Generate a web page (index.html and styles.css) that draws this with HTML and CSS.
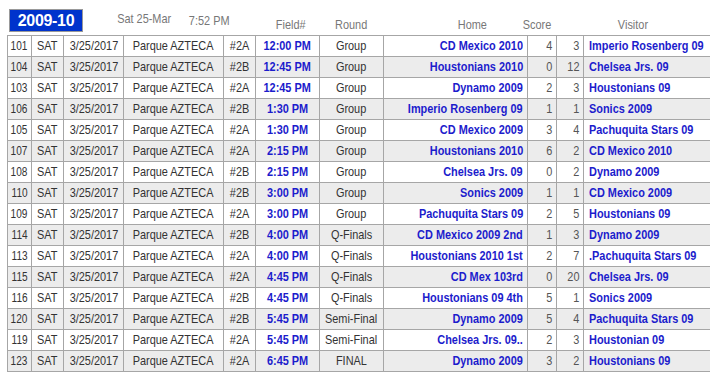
FILE: index.html
```html
<!DOCTYPE html>
<html>
<head>
<meta charset="utf-8">
<link rel="stylesheet" href="styles.css">
</head>
<body>
<div class="page">
  <div class="top">
    <div class="badge">2009-10</div>
    <span class="meta meta-date"><span class="t">Sat 25-Mar</span></span>
    <span class="meta meta-time"><span class="t">7:52 PM</span></span>
    <span class="lbl lbl-field"><span class="t">Field#</span></span>
    <span class="lbl lbl-round"><span class="t">Round</span></span>
    <span class="lbl lbl-home"><span class="t">Home</span></span>
    <span class="lbl lbl-score"><span class="t">Score</span></span>
    <span class="lbl lbl-visitor"><span class="t">Visitor</span></span>
  </div>
  <div class="sched" id="sched"></div>
</div>
<script src="app.js"></script>
</body>
</html>
```

FILE: app.js
```js
var games = [
  ["101","#2A","12:00 PM","Group","CD Mexico 2010","4","3","Imperio Rosenberg 09"],
  ["104","#2B","12:45 PM","Group","Houstonians 2010","0","12","Chelsea Jrs. 09"],
  ["103","#2A","12:45 PM","Group","Dynamo 2009","2","3","Houstonians 09"],
  ["106","#2B","1:30 PM","Group","Imperio Rosenberg 09","1","1","Sonics 2009"],
  ["105","#2A","1:30 PM","Group","CD Mexico 2009","3","4","Pachuquita Stars 09"],
  ["107","#2A","2:15 PM","Group","Houstonians 2010","6","2","CD Mexico 2010"],
  ["108","#2B","2:15 PM","Group","Chelsea Jrs. 09","0","2","Dynamo 2009"],
  ["110","#2B","3:00 PM","Group","Sonics 2009","1","1","CD Mexico 2009"],
  ["109","#2A","3:00 PM","Group","Pachuquita Stars 09","2","5","Houstonians 09"],
  ["114","#2B","4:00 PM","Q-Finals","CD Mexico 2009 2nd","1","3","Dynamo 2009"],
  ["113","#2A","4:00 PM","Q-Finals","Houstonians 2010 1st","2","7",".Pachuquita Stars 09"],
  ["115","#2A","4:45 PM","Q-Finals","CD Mex 103rd","0","20","Chelsea Jrs. 09"],
  ["116","#2B","4:45 PM","Q-Finals","Houstonians 09 4th","5","1","Sonics 2009"],
  ["120","#2B","5:45 PM","Semi-Final","Dynamo 2009","5","4","Pachuquita Stars 09"],
  ["119","#2A","5:45 PM","Semi-Final","Chelsea Jrs. 09..","2","3","Houstonian 09"],
  ["123","#2A","6:45 PM","FINAL","Dynamo 2009","3","2","Houstonians 09"]
];
function cell(cls, v) {
  return '<div class="c ' + cls + '"><span class="t">' + v + '</span></div>';
}
var html = "";
games.forEach(function (g) {
  html += '<div class="row">' +
    cell("c-no", g[0]) +
    cell("", "SAT") +
    cell("", "3/25/2017") +
    cell("", "Parque AZTECA") +
    cell("", g[1]) +
    cell("c-time", g[2]) +
    cell("", g[3]) +
    cell("c-home", g[4]) +
    cell("c-score", g[5]) +
    cell("c-score", g[6]) +
    cell("c-visitor", g[7]) +
    '</div>';
});
document.getElementById("sched").innerHTML = html;
```

FILE: styles.css
```css
html, body {
  margin: 0;
  padding: 0;
  background: #fff;
  overflow: hidden;
}
.page {
  width: 710px;
  padding-left: 7px;
  box-sizing: border-box;
  font-family: "Liberation Sans", Arial, sans-serif;
  font-size: 13px;
  color: #333;
}
.t {
  display: inline-block;
  white-space: nowrap;
  transform: scaleX(0.84);
  transform-origin: center;
}
.top {
  height: 35px;
  display: flex;
  align-items: flex-start;
}
.badge {
  margin: 9px 0 0 2px;
  width: 74px;
  height: 23px;
  box-sizing: border-box;
  border: 1px solid #999;
  background: #0033cc;
  color: #fff;
  font-weight: bold;
  font-size: 16px;
  line-height: 21px;
  text-align: center;
  letter-spacing: -0.3px;
}
.meta, .lbl {
  line-height: 15px;
  color: #777;
  text-align: center;
  width: 60px;
  white-space: nowrap;
}
.meta-date { margin: 11px 0 0 29px; }
.meta-time { margin: 13px 0 0 7px; }
.lbl { margin-top: 17px; }
.lbl-field { margin-left: 22px; }
.lbl-round { margin-left: 0; }
.lbl-home { margin-left: 61px; }
.lbl-score { margin-left: 5px; }
.lbl-visitor { margin-left: 36px; }

.sched {
  border-top: 1px solid #a6a6a6;
  border-left: 1px solid #a6a6a6;
}
.row {
  display: grid;
  grid-template-columns: 24px 32px 60px 100px 32px 64px 64px 144px 29px 27px 126px;
  background: #fff;
}
.row:nth-child(even) {
  background: #ececec;
}
.c {
  box-sizing: border-box;
  height: 21px;
  line-height: 20px;
  border-right: 1px solid #a6a6a6;
  border-bottom: 1px solid #a6a6a6;
  text-align: center;
  white-space: nowrap;
  overflow: visible;
}
.c:last-child {
  border-right: none;
}
.c-no {
  font-size: 12px;
}
.c-time {
  color: #1c1ccc;
  font-weight: bold;
}
.c-home {
  color: #1c1ccc;
  font-weight: bold;
  text-align: right;
  padding-right: 4px;
}
.c-home .t { transform-origin: right center; }
.c-score {
  text-align: right;
  padding-right: 4px;
  color: #555;
}
.c-score .t { transform-origin: right center; }
.c-visitor {
  color: #1c1ccc;
  font-weight: bold;
  text-align: left;
  padding-left: 5px;
}
.c-visitor .t { transform-origin: left center; }
```
